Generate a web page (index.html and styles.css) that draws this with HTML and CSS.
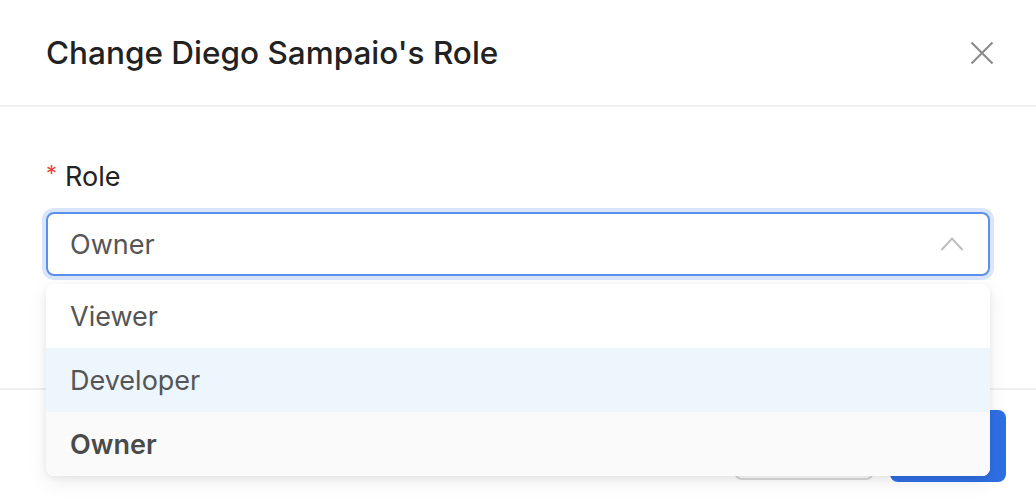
FILE: index.html
```html
<!DOCTYPE html>
<html>
<head>
<meta charset="utf-8">
<link rel="stylesheet" href="styles.css">
</head>
<body>
<div class="modal">
  <div class="modal-header">
    <div class="modal-title">Change Diego Sampaio's Role</div>
    <button class="close" aria-label="Close">
      <svg width="24" height="24" viewBox="0 0 24 24"><path d="M1.5 1.5 L22.5 22.5 M22.5 1.5 L1.5 22.5" stroke="#8c8c8c" stroke-width="2.2" fill="none"/></svg>
    </button>
  </div>
  <div class="modal-body">
    <div class="label"><span class="req">*</span>Role</div>
    <div class="select">
      <span class="select-value">Owner</span>
      <svg class="chev" width="24" height="16" viewBox="0 0 24 16"><path d="M1.5 14 L12 2.5 L22.5 14" stroke="#bfbfbf" stroke-width="2" fill="none"/></svg>
    </div>
    <div class="dropdown">
      <div class="option">Viewer</div>
      <div class="option active">Developer</div>
      <div class="option selected">Owner</div>
    </div>
  </div>
  <div class="modal-footer">
    <button class="btn btn-default">Cancel</button>
    <button class="btn btn-primary">OK</button>
  </div>
</div>
</body>
</html>
```
FILE: styles.css
```css
html, body {
  margin: 0;
  padding: 0;
  background: #ffffff;
  font-family: Inter, "Noto Sans", "Liberation Sans", sans-serif;
}
.modal {
  width: 1036px;
  height: 500px;
  overflow: hidden;
  position: relative;
}
.modal-header {
  height: 105px;
  border-bottom: 2px solid #f0f0f0;
  display: flex;
  align-items: center;
  justify-content: space-between;
  padding: 0 42px 0 46px;
  box-sizing: content-box;
}
.modal-title {
  font-size: 31.5px;
  font-weight: 500;
  color: #222222;
  letter-spacing: 0;
}
.close {
  border: 0;
  background: none;
  padding: 0;
  width: 24px;
  height: 24px;
  display: flex;
}
.modal-body {
  position: relative;
  padding: 50px 46px 0 46px;
  height: 231px;
}
.label {
  font-size: 27px;
  color: #222222;
  height: 40px;
  line-height: 40px;
  display: flex;
  align-items: center;
}
.req {
  color: #e5483f;
  font-size: 22px;
  margin-right: 8px;
  position: relative;
  top: -4px;
}
.select {
  margin-top: 15px;
  height: 60px;
  border: 2px solid #5b8fea;
  border-radius: 8px;
  box-shadow: 0 0 0 4px #d8e5fb;
  display: flex;
  align-items: center;
  justify-content: space-between;
  padding: 0 24px 0 22px;
}
.select-value {
  font-size: 27px;
  color: #555555;
}
.chev {
  display: block;
}
.dropdown {
  position: absolute;
  left: 46px;
  top: 177px;
  width: 944px;
  background: #ffffff;
  border-radius: 8px;
  box-shadow: 0 6px 20px rgba(0,0,0,0.08), 0 2px 6px rgba(0,0,0,0.06);
  overflow: hidden;
  z-index: 2;
}
.option {
  height: 64px;
  display: flex;
  align-items: center;
  padding-left: 24px;
  font-size: 27px;
  color: #555555;
}
.option.active {
  background: #edf5fd;
}
.option.selected {
  background: #fafafa;
  font-weight: 600;
  color: #4a4a4a;
}
.modal-footer {
  border-top: 2px solid #f0f0f0;
  display: flex;
  align-items: flex-start;
  justify-content: flex-end;
  gap: 16px;
  padding: 20px 30px 0 0;
}
.btn {
  height: 72px;
  border-radius: 8px;
  font-size: 26px;
  font-family: inherit;
  padding: 0 28px;
}
.btn-default {
  width: 140px;
  height: 70px;
  background: #ffffff;
  border: 2px solid #d9d9d9;
  color: #444;
}
.btn-primary {
  width: 116px;
  background: #2f6fe4;
  border: 0;
  color: #ffffff;
}
```
